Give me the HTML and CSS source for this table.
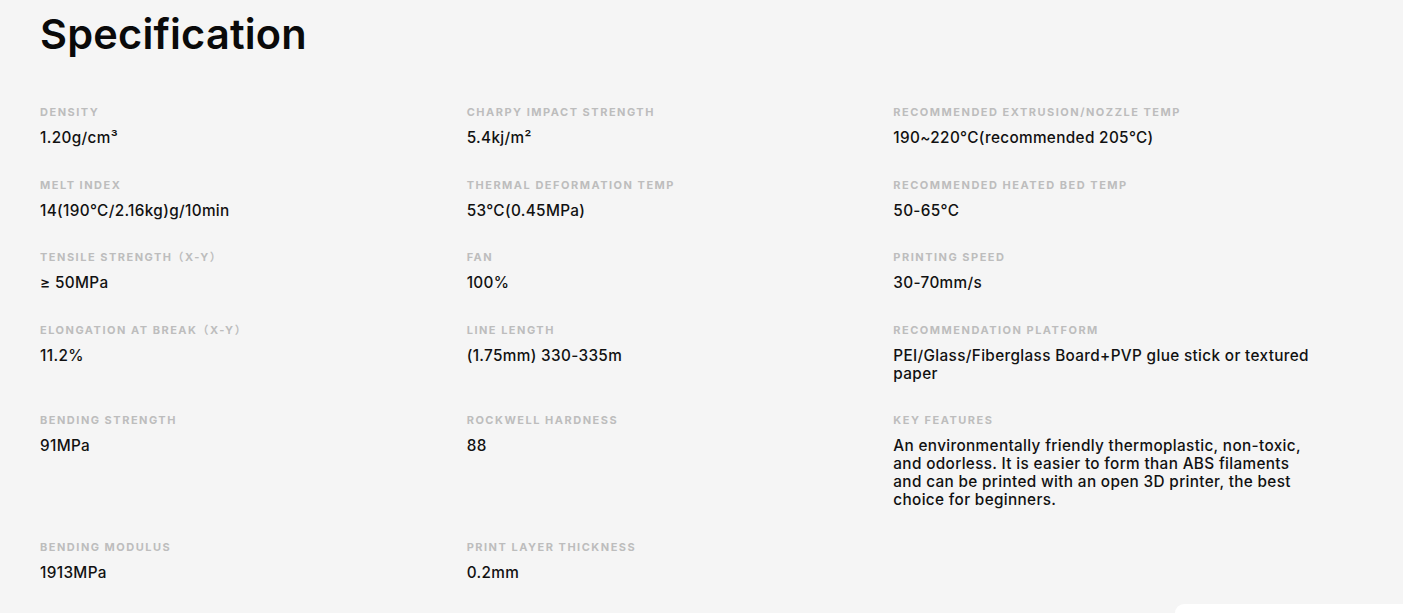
FILE: index.html
```html
<!DOCTYPE html>
<html lang="en">
<head>
<meta charset="utf-8">
<title>Specification</title>
<link rel="stylesheet" href="styles.css">
</head>
<body>
<main class="page">
  <h1 class="title">Specification</h1>
  <div class="specs">
    <div class="spec"><div class="label">Density</div><div class="value">1.20g/cm³</div></div>
    <div class="spec"><div class="label">Charpy impact strength</div><div class="value">5.4kj/m²</div></div>
    <div class="spec"><div class="label">Recommended extrusion/nozzle temp</div><div class="value">190~220°C(recommended 205°C)</div></div>

    <div class="spec"><div class="label">Melt index</div><div class="value">14(190°C/2.16kg)g/10min</div></div>
    <div class="spec"><div class="label">Thermal deformation temp</div><div class="value">53°C(0.45MPa)</div></div>
    <div class="spec"><div class="label">Recommended heated bed temp</div><div class="value">50-65°C</div></div>

    <div class="spec"><div class="label">Tensile strength（X-Y）</div><div class="value">≥ 50MPa</div></div>
    <div class="spec"><div class="label">Fan</div><div class="value">100%</div></div>
    <div class="spec"><div class="label">Printing speed</div><div class="value">30-70mm/s</div></div>

    <div class="spec"><div class="label">Elongation at break（X-Y）</div><div class="value">11.2%</div></div>
    <div class="spec"><div class="label">Line length</div><div class="value">(1.75mm) 330-335m</div></div>
    <div class="spec"><div class="label">Recommendation platform</div><div class="value">PEI/Glass/Fiberglass Board+PVP glue stick or textured paper</div></div>

    <div class="spec"><div class="label">Bending strength</div><div class="value">91MPa</div></div>
    <div class="spec"><div class="label">Rockwell hardness</div><div class="value">88</div></div>
    <div class="spec"><div class="label">Key features</div><div class="value">An environmentally friendly thermoplastic, non-toxic, and odorless. It is easier to form than ABS filaments and can be printed with an open 3D printer, the best choice for beginners.</div></div>

    <div class="spec"><div class="label">Bending modulus</div><div class="value">1913MPa</div></div>
    <div class="spec"><div class="label">Print layer thickness</div><div class="value">0.2mm</div></div>
    <div class="spec"></div>
  </div>
  <div class="footer-edge"><div class="edge-card"></div></div>
</main>
</body>
</html>
```

FILE: styles.css
```css
html, body {
  margin: 0;
  padding: 0;
  background: #f5f5f5;
  overflow: hidden;
}

body {
  font-family: Inter, "Noto Sans", "Noto Sans CJK SC", sans-serif;
  color: #111;
}

.page {
  width: 1403px;
  height: 613px;
  box-sizing: border-box;
  padding: 8px 0 0 40px;
  display: flex;
  flex-direction: column;
}

.title {
  margin: 0;
  font-size: 41.5px;
  line-height: 52px;
  font-weight: 600;
  letter-spacing: 0.2px;
  color: #0a0a0a;
}

.specs {
  margin-top: 44px;
  width: 1280px;
  display: grid;
  grid-template-columns: repeat(3, 1fr);
  row-gap: 29.6px;
}

.spec {
  padding-right: 9px;
}

.label {
  font-size: 11px;
  line-height: 16px;
  font-weight: 700;
  letter-spacing: 1.5px;
  text-transform: uppercase;
  color: #bdbdbd;
  margin-bottom: 9px;
}

.value {
  font-size: 15.3px;
  line-height: 18px;
  font-weight: 500;
  letter-spacing: 0.35px;
  color: #111;
}

.footer-edge {
  margin-top: auto;
  display: flex;
  justify-content: flex-end;
}

.edge-card {
  width: 228px;
  height: 9px;
  background: #ffffff;
  border-top-left-radius: 10px;
}
```
